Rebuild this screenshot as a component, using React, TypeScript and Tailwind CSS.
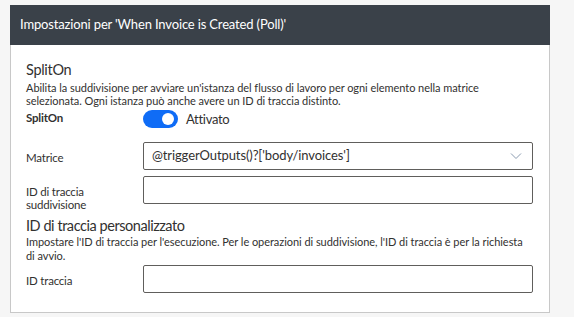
import React from "react";

const font = { fontFamily: "Lato, 'Liberation Sans', sans-serif" };

const Field: React.FC<{ label: React.ReactNode; children: React.ReactNode; className?: string }> = ({
  label,
  children,
  className,
}) => (
  <div className={`flex items-start ${className ?? ""}`}>
    <div className="w-[117px] shrink-0 pt-[9px] text-[11.5px] tracking-[-0.2px] leading-[13px] text-[#323130]">
      {label}
    </div>
    <div className="flex-1">{children}</div>
  </div>
);

export default function App() {
  return (
    <div className="w-[574px] h-[317px] bg-[#f6f6f6] pt-[5px] pl-[10px]" style={font}>
      <div className="w-[540px] h-[308px] border border-[#c8c8c8] bg-white">
        {/* Header */}
        <div className="h-[40px] -mx-px -mt-px bg-[#3a4149] flex items-center pl-[10px] text-[13px] tracking-[-0.15px] text-white">
          Impostazioni per 'When Invoice is Created (Poll)'
        </div>

        <div className="pl-[15px] pr-[16px] pt-[15px] text-[#323130] whitespace-nowrap">
          {/* SplitOn section */}
          <div className="text-[14.5px] tracking-[-0.3px] leading-[20px]">SplitOn</div>
          <p className="text-[11px] tracking-[-0.05px] leading-[13px] mt-[1px]">
            Abilita la suddivisione per avviare un'istanza del flusso di lavoro per ogni elemento nella matrice
            <br />
            selezionata. Ogni istanza può anche avere un ID di traccia distinto.
          </p>

          <div className="flex items-start mt-[3px]">
            <div className="w-[117px] shrink-0 text-[11.5px] tracking-[-0.2px] font-bold leading-[15px]">SplitOn</div>
            <div className="flex items-center gap-[8px]">
              <div className="w-[35px] h-[18px] rounded-full bg-[#0f6cf6] flex items-center justify-end pr-[4px]">
                <div className="w-[12px] h-[12px] rounded-full bg-white" />
              </div>
              <span className="text-[13px] tracking-[-0.3px] leading-[18px]">Attivato</span>
            </div>
          </div>

          <Field label="Matrice" className="mt-[14px]">
            <div className="h-[28px] border border-[#605e5c] rounded-[2px] flex items-center justify-between pl-[8px] pr-[10px] text-[13px] tracking-[-0.1px]">
              <span>@triggerOutputs()?['body/invoices']</span>
              <svg width="12" height="8" viewBox="0 0 12 8" fill="none">
                <path d="M1 1.5 L6 6.5 L11 1.5" stroke="#8a9bb0" strokeWidth="1" />
              </svg>
            </div>
          </Field>

          <Field
            label={
              <>
                ID di traccia
                <br />
                suddivisione
              </>
            }
            className="mt-[6px]"
          >
            <div className="h-[28px] border border-[#605e5c] rounded-[2px]" />
          </Field>

          {/* Custom tracking ID */}
          <div className="text-[14.5px] tracking-[-0.45px] leading-[18px] mt-[6px]">ID di traccia personalizzato</div>
          <p className="text-[11px] tracking-[-0.05px] leading-[14px]">
            Impostare l'ID di traccia per l'esecuzione. Per le operazioni di suddivisione, l'ID di traccia è per la richiesta
            <br />
            di avvio.
          </p>

          <Field label="ID traccia" className="mt-[2px]">
            <div className="h-[28px] border border-[#605e5c] rounded-[2px]" />
          </Field>
        </div>
      </div>
    </div>
  );
}
